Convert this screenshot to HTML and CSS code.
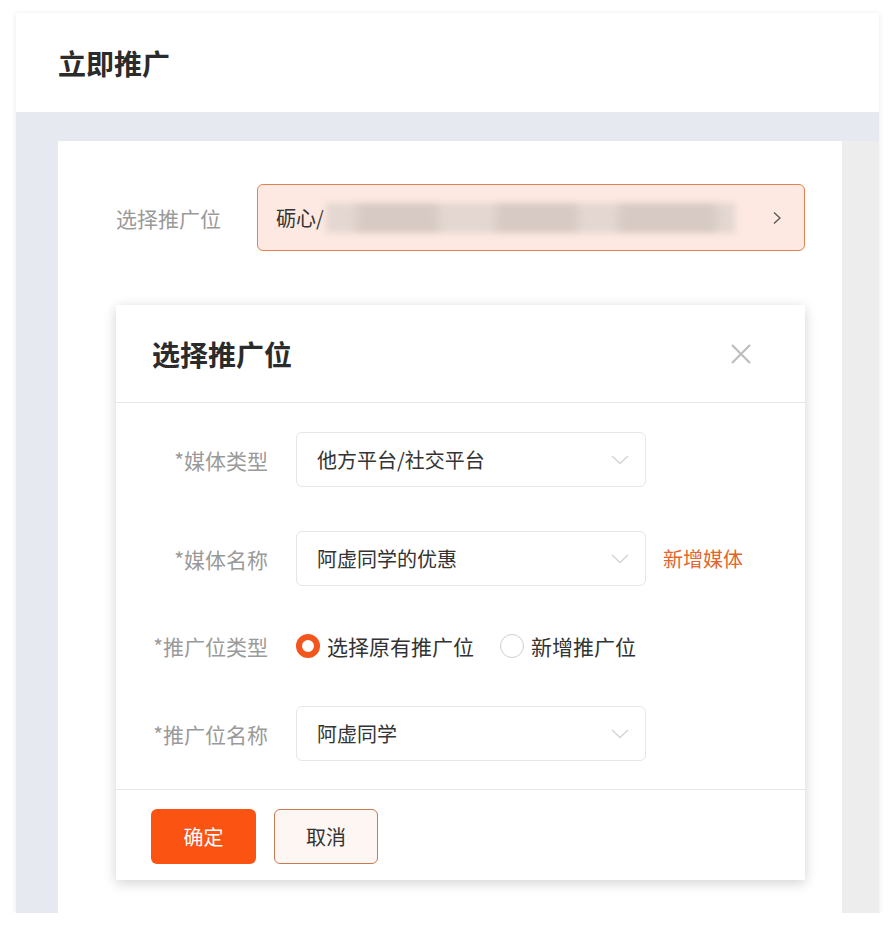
FILE: index.html
```html
<!DOCTYPE html>
<html lang="zh-CN">
<head>
  <meta charset="UTF-8">
  <meta name="viewport" content="width=device-width, initial-scale=1.0">
  <title>立即推广</title>
  <link rel="stylesheet" href="styles.css">
</head>
<body>

  <div class="page">
    <div class="page-header">
      <h1>立即推广</h1>
    </div>

    <div class="page-body">
      <div class="panel">
        <div class="pick-row">
          <span class="pick-label">选择推广位</span>
          <div class="pick-input">
            <span class="pick-value">砺心/</span>
            <span class="pick-blur"></span>
            <svg class="pick-arrow" width="10" height="14" viewBox="0 0 10 14">
              <path d="M2 1.5 L8 7 L2 12.5" fill="none" stroke="#555" stroke-width="1.3"/>
            </svg>
          </div>
        </div>

        <div class="dialog">
          <div class="dialog-head">
            <h2>选择推广位</h2>
            <svg class="dialog-close" width="22" height="22" viewBox="0 0 22 22">
              <path d="M2 2 L20 20 M20 2 L2 20" stroke="#bdbdbd" stroke-width="2.2"/>
            </svg>
          </div>

          <div class="dialog-body">
            <div class="form-row">
              <label class="form-label">*媒体类型</label>
              <div class="select">
                <span>他方平台/社交平台</span>
                <svg class="select-arrow" width="18" height="10" viewBox="0 0 18 10">
                  <path d="M1 1 L9 8.5 L17 1" fill="none" stroke="#d4d4d4" stroke-width="1.4"/>
                </svg>
              </div>
            </div>

            <div class="form-row">
              <label class="form-label">*媒体名称</label>
              <div class="select">
                <span>阿虚同学的优惠</span>
                <svg class="select-arrow" width="18" height="10" viewBox="0 0 18 10">
                  <path d="M1 1 L9 8.5 L17 1" fill="none" stroke="#d4d4d4" stroke-width="1.4"/>
                </svg>
              </div>
              <a class="form-link">新增媒体</a>
            </div>

            <div class="form-row radio-row">
              <label class="form-label">*推广位类型</label>
              <div class="radio-group">
                <span class="radio checked"></span>
                <span class="radio-text">选择原有推广位</span>
                <span class="radio"></span>
                <span class="radio-text">新增推广位</span>
              </div>
            </div>

            <div class="form-row">
              <label class="form-label">*推广位名称</label>
              <div class="select">
                <span>阿虚同学</span>
                <svg class="select-arrow" width="18" height="10" viewBox="0 0 18 10">
                  <path d="M1 1 L9 8.5 L17 1" fill="none" stroke="#d4d4d4" stroke-width="1.4"/>
                </svg>
              </div>
            </div>
          </div>

          <div class="dialog-foot">
            <button class="btn btn-primary">确定</button>
            <button class="btn btn-cancel">取消</button>
          </div>
        </div>
      </div>
      <div class="side-strip"></div>
    </div>
  </div>

</body>
</html>
```

FILE: styles.css
```css
* {
  margin: 0;
  padding: 0;
  box-sizing: border-box;
}

body {
  font-family: "Noto Sans CJK SC", "Noto Sans", sans-serif;
  background-color: #ffffff;
  color: #333;
  padding: 13px 14px 0 16px;
}

.page {
  height: 900px;
  display: flex;
  flex-direction: column;
  background-color: #ffffff;
  box-shadow: 0 1px 6px rgba(0, 0, 0, 0.09);
}

.page-header {
  height: 99px;
  display: flex;
  align-items: center;
  padding-left: 42px;
}

.page-header h1 {
  font-size: 28px;
  font-weight: 700;
  color: #2b2b2b;
}

.page-body {
  flex: 1;
  display: flex;
  background-color: #e6e9f0;
  padding: 29px 0 0 42px;
}

.panel {
  width: 784px;
  background-color: #ffffff;
  padding: 43px 0 0 58px;
}

.side-strip {
  flex: 1;
  background-color: #ededee;
}

/* selected position row */
.pick-row {
  display: flex;
  align-items: center;
}

.pick-label {
  width: 141px;
  font-size: 21px;
  color: #9a9a9a;
}

.pick-input {
  width: 548px;
  height: 67px;
  display: flex;
  align-items: center;
  padding: 0 22px 0 18px;
  background-color: #fde9e1;
  border: 1px solid #e0834f;
  border-radius: 6px;
}

.pick-value {
  font-size: 20px;
  color: #333;
}

.pick-blur {
  width: 409px;
  height: 30px;
  margin-left: 2px;
  background: linear-gradient(90deg,
    #e4d7d1 0, #e4d7d1 6%, #d7c9c3 9%, #d7c9c3 26%, #e4d7d1 29%,
    #e4d7d1 40%, #d7c9c3 43%, #d7c9c3 60%, #e4d7d1 63%,
    #e4d7d1 70%, #d7c9c3 73%, #d7c9c3 94%, #e4d7d1 97%);
  filter: blur(3px);
}

.pick-arrow {
  margin-left: auto;
}

/* dialog */
.dialog {
  width: 689px;
  margin-top: 54px;
  background-color: #ffffff;
  box-shadow: 0 3px 12px rgba(0, 0, 0, 0.18);
}

.dialog-head {
  height: 98px;
  display: flex;
  align-items: center;
  justify-content: space-between;
  padding: 0 53px 0 36px;
  border-bottom: 1px solid #e6e6e6;
}

.dialog-head h2 {
  font-size: 28px;
  font-weight: 700;
  color: #2b2b2b;
}

.dialog-body {
  padding: 29px 0 28px;
}

.form-row {
  display: flex;
  align-items: center;
  margin-bottom: 44px;
}

.form-row:last-child {
  margin-bottom: 0;
}

.form-label {
  width: 152px;
  text-align: right;
  font-size: 21px;
  color: #9a9a9a;
  margin-right: 28px;
}

.select {
  width: 350px;
  height: 55px;
  display: flex;
  align-items: center;
  justify-content: space-between;
  padding: 0 16px 0 20px;
  border: 1px solid #e6e6e6;
  border-radius: 6px;
  font-size: 20px;
  line-height: 1.2;
  color: #333;
}

.form-link {
  margin-left: 17px;
  font-size: 20px;
  color: #e3652c;
}

.radio-row {
  height: 32px;
}

.radio-group {
  display: flex;
  align-items: center;
  font-size: 21px;
  color: #333;
}

.radio {
  width: 24px;
  height: 24px;
  border: 1px solid #cfcfcf;
  border-radius: 50%;
  background-color: #fff;
}

.radio.checked {
  border: 6px solid #f2561d;
}

.radio-text {
  margin-left: 7px;
  margin-right: 26px;
}

.dialog-foot {
  display: flex;
  gap: 18px;
  padding: 19px 0 16px 35px;
  border-top: 1px solid #e6e6e6;
}

.btn {
  height: 55px;
  font-family: inherit;
  font-size: 20px;
  border-radius: 6px;
  cursor: pointer;
}

.btn-primary {
  width: 105px;
  background-color: #fa5312;
  border: none;
  color: #fff;
}

.btn-cancel {
  width: 104px;
  background-color: #fdf6f2;
  border: 1px solid #c97a52;
  color: #333;
}
```
